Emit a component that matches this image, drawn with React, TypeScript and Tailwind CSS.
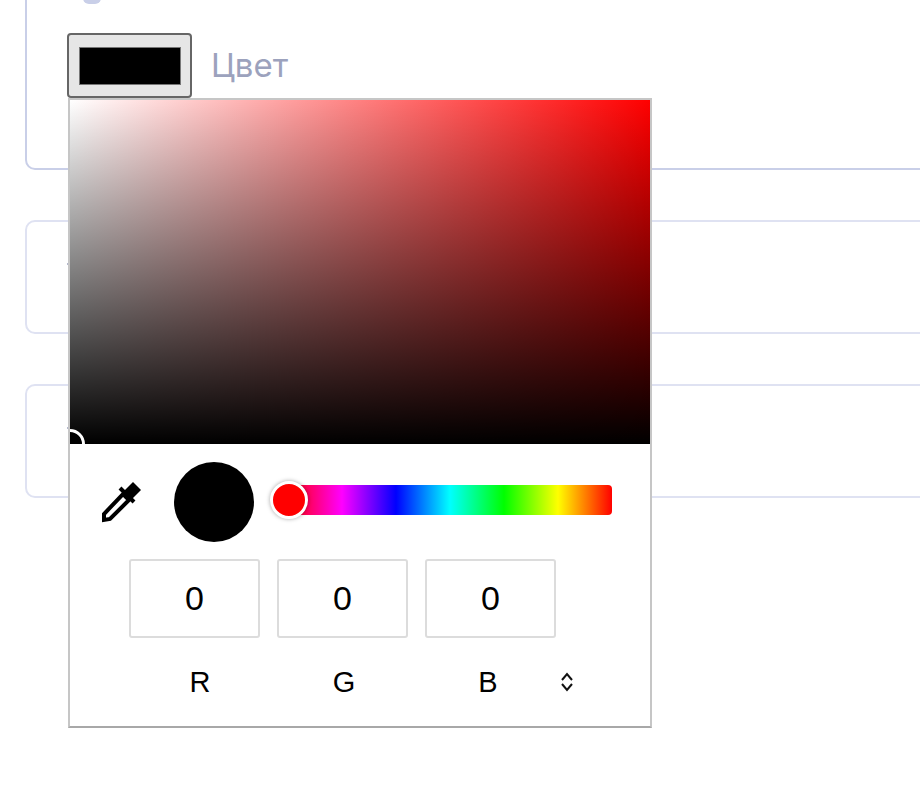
function Eyedropper() {
  return (
    <svg width="40" height="42" viewBox="0 0 40 42" className="block">
      <path d="M31 1 L39 9 L30 18 L22 10 Z" fill="#000" />
      <path d="M18 7 L32 21" stroke="#000" strokeWidth="4" />
      <path d="M21 13 L27 19 L8 38 L2 39 L2 33 Z" fill="#fff" stroke="#000" strokeWidth="4" />
    </svg>
  );
}

function Chevrons() {
  return (
    <svg width="14" height="20" viewBox="0 0 14 20" fill="none" stroke="#111" strokeWidth="2" className="block">
      <path d="M2 8 L7 2 L12 8" />
      <path d="M2 12 L7 18 L12 12" />
    </svg>
  );
}

function ColorPicker() {
  const values = [
    { label: 'R', value: '0' },
    { label: 'G', value: '0' },
    { label: 'B', value: '0' },
  ];

  return (
    <div className="absolute left-[68px] top-[98px] w-[584px] h-[630px] bg-white border-2 border-[#c6c6c6] border-b-[#a8a8a8] font-['Liberation_Sans',sans-serif] text-black">
      {/* Saturation area */}
      <div className="relative h-[344px] overflow-hidden bg-[linear-gradient(to_top,#000,transparent),linear-gradient(to_right,#fff,#f00)]">
        <div className="absolute left-[-15px] bottom-[-15px] w-[30px] h-[30px] rounded-full border-[3px] border-white bg-black"></div>
      </div>

      {/* Eyedropper, preview, hue slider */}
      <div className="flex items-center h-[115px] pl-[32px]">
        <Eyedropper />
        <div className="ml-[32px] w-[80px] h-[80px] rounded-full bg-black"></div>
        <div className="relative ml-[34px] w-[324px] h-[30px] -mt-[3px] rounded-r-[4px] bg-[linear-gradient(to_right,#f00,#f0f,#00f,#0ff,#0f0,#ff0,#f00)]">
          <div className="absolute left-[-18px] top-[-4px] w-[38px] h-[38px] rounded-full bg-[#f00] border-[3px] border-white shadow-[0_0_4px_rgba(0,0,0,0.35)]"></div>
        </div>
      </div>

      {/* RGB fields */}
      <div className="flex gap-[17px] pl-[59px]">
        {values.map((item) => (
          <div
            key={item.label}
            className="flex items-center justify-center w-[131px] h-[79px] rounded-[3px] border-2 border-[#dcdcdc] text-[34px]"
          >
            {item.value}
          </div>
        ))}
      </div>
      <div className="flex items-center pl-[58px] mt-[24px]">
        {values.map((item) => (
          <div key={item.label} className="w-[144px] text-center text-[29px] leading-[40px] last:w-[142px]">
            {item.label}
          </div>
        ))}
        <Chevrons />
      </div>
    </div>
  );
}

export default function App() {
  return (
    <div className="relative w-[920px] h-[796px] overflow-hidden bg-white">
      <div className="flex flex-col gap-[50px] pl-[25px] -mr-[40px] -mt-[40px]">
        {/* First card */}
        <div className="relative h-[210px] rounded-l-[10px] border-2 border-[#c9cfe8]">
          <div className="absolute left-[56px] top-[36px] w-[18px] h-[6px] rounded-b-full bg-[#c9cfe8]"></div>
          <div className="flex items-center gap-[19px] pl-[40px] pt-[71px]">
            <div className="flex items-center justify-center w-[125px] h-[65px] rounded-[4px] border-2 border-[#666] bg-[#e6e6e6]">
              <div className="w-[102px] h-[38px] border border-[#777] bg-black"></div>
            </div>
            <span className="font-['Inter',sans-serif] text-[33px] text-[#9ca2bd]">Цвет</span>
          </div>
        </div>
        <div className="relative h-[114px] rounded-l-[10px] border-2 border-[#dfe2f2]">
          <div className="absolute left-[40px] top-[41px] w-[2px] h-[2px] bg-[#b4b8cc]"></div>
        </div>
        <div className="relative h-[114px] rounded-l-[10px] border-2 border-[#dfe2f2]">
          <div className="absolute left-[40px] top-[41px] w-[2px] h-[2px] bg-[#b4b8cc]"></div>
        </div>
      </div>
      <ColorPicker />
    </div>
  );
}
